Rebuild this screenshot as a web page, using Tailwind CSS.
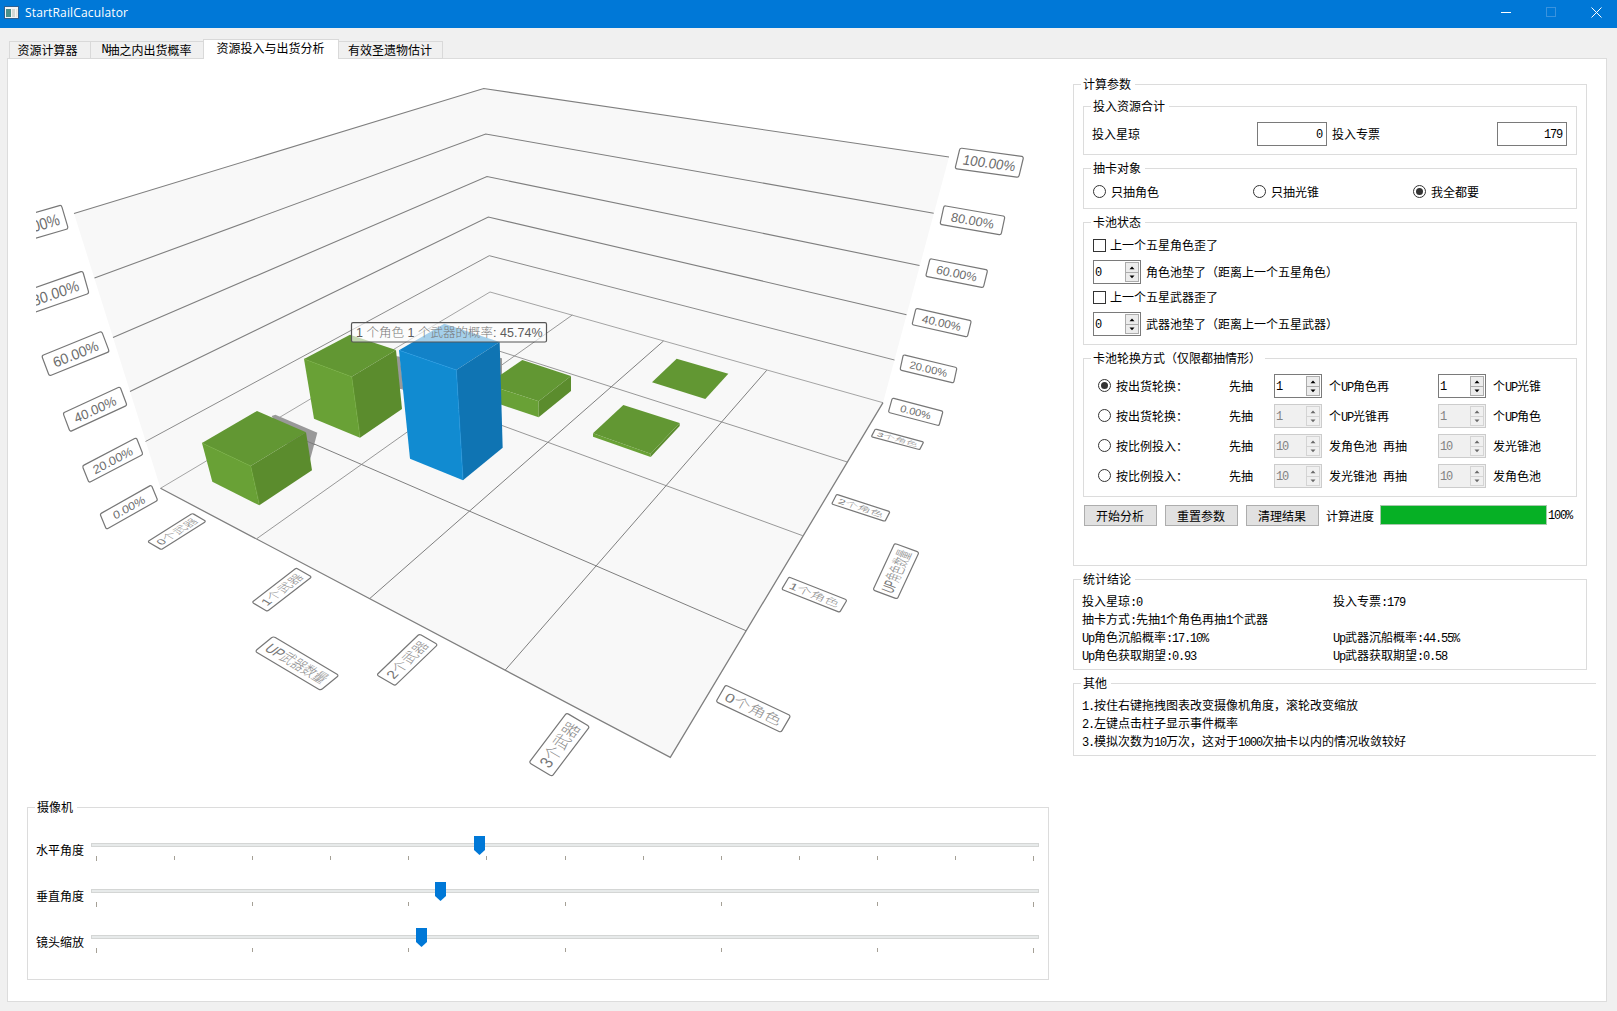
<!DOCTYPE html>
<html lang="zh-CN">
<head>
<meta charset="utf-8">
<title>StartRailCaculator</title>
<script src="https://cdn.jsdelivr.net/npm/@tailwindcss/browser@4"></script>
</head>
<body class="flex h-[1011px] w-[1617px] flex-col overflow-hidden bg-[#f0f0f0] font-['Noto_Sans_CJK_SC',sans-serif] text-[12px] leading-[18px] whitespace-nowrap text-black [&_i]:font-['Liberation_Mono',monospace] [&_i]:leading-none [&_i]:tracking-[-1.2px] [&_i]:not-italic">

<!-- Title bar -->
<header class="flex h-7 shrink-0 items-center bg-[#0078d7] pl-1 text-white">
  <svg class="-mt-1 h-[13px] w-[15px]" viewBox="0 0 15 13"><rect x=".5" y=".5" width="14" height="12" fill="#f4f4f4" stroke="#2f5f8f"/><rect x="2" y="3" width="5" height="8" fill="#4a8f8a"/><rect x="8" y="3" width="3" height="8" fill="#d4d8d4"/><rect x="12" y="3" width="1.5" height="8" fill="#e8e4dc"/></svg>
  <span class="-mt-[3px] ml-[6px] font-['Open_Sans',sans-serif] text-[12px] tracking-[0.16px]">StartRailCaculator</span>
  <svg class="-mt-1 mr-[15px] ml-auto h-[11px] w-[101px]" viewBox="0 0 101 11" fill="none" stroke="#fff"><path d="M0 5.5H10"/><rect x="45.500" y=".5" width="9" height="9" stroke="#3a93de"/><path d="M90.500 .5l10 10M100.500 .5l-10 10"/></svg>
</header>

<main class="flex flex-col pt-[11px] pl-[7px]">
  <!-- Tabs -->
  <nav class="relative z-10 -mb-px flex items-end pl-[2px] leading-[16px] [&>div]:flex [&>div]:justify-center [&>div]:border [&>div]:border-[#d9d9d9] [&>div]:pr-px">
    <div class="h-[18px] w-[82px] bg-[#f0f0f0] pr-[5px]!">资源计算器</div>
    <div class="-ml-px h-[18px] w-[114px] items-center bg-[#f0f0f0]"><i>N</i>抽之内出货概率</div>
    <div class="-ml-px h-[20px] w-[136px] border-b-0! bg-white">资源投入与出货分析</div>
    <div class="-ml-px h-[18px] w-[105px] bg-[#f0f0f0]">有效圣遗物估计</div>
  </nav>

  <section class="flex h-[944px] w-[1600px] border border-[#dcdcdc] bg-white">
    <div class="ml-[19px] flex w-[1022px] flex-col">
      <svg id="chart" class="ml-[9px] h-[748px] w-[1013px] shrink-0" viewBox="36 59 1013 748" fill="none">
        <!-- walls and floor -->
        <path fill="#f8f8f8" d="M74 213.500L483.700 88.500L949 157L883 402.700L670.300 757.300L160.500 488.300Z"/>
        <g stroke="#7f7f7f" stroke-width="1.100">
          <path d="M74 213.500L483.700 88.500L949 157"/>
          <path d="M94.500 278L485.700 134L933.700 213.300"/>
          <path d="M113 337.500L487 176.500L919.500 265.500"/>
          <path d="M130 391.500L488.300 217L906.500 314.700"/>
          <path stroke-width=".9" d="M145.500 441.500L489.300 255.700L894.500 360"/>
          <path stroke-width=".7" d="M160.500 488.300L490 292L883 402.700"/>
          <path stroke-width="1.300" d="M160.500 488.300L670.300 757.300L883 402.700"/>
          <path stroke-width=".8" d="M257 538.500L572.300 315M428.600 328.600L847.300 462M355.800 371.900L802.700 535.700"/>
          <path stroke-width="1" d="M370 598.300L663.500 341M505.300 670L766.700 370.300M268.200 424.100L746 630.700"/>
        </g>
        <!-- bars -->
        <g transform="translate(190 290) scale(.33333)">
          <path fill="#999" d="M245 378L256 374L382 428L360 510L300 480ZM616 198L630 200L640 296L626 297ZM928 203L936 205V300H928Z"/>
          <path stroke="#777" stroke-width="2.500" d="M340 449L375 464"/>
          <path fill="#629733" d="M36 459L201 363L348 427L182 528Z"/>
          <path fill="#69a136" d="M36 459L182 528L208 646L67 575Z"/>
          <path fill="#5b8c2d" d="M182 528L348 427L366 541L208 646Z"/>
          <path stroke="#6fab3a" stroke-width="2" d="M36 459L182 528L208 640"/>
          <path fill="#629733" d="M342 207L480 134L618 180L485 260Z"/>
          <path fill="#69a136" d="M342 207L485 260L510 443L372 386Z"/>
          <path fill="#5b8c2d" d="M485 260L618 180L636 357L510 443Z"/>
          <path stroke="#6fab3a" stroke-width="2" d="M342 207L485 260L510 438"/>
          <path fill="#629733" d="M930 256L997 210L1143 258L1046 334L930 296Z"/>
          <path fill="#69a136" d="M930 296L1046 334V382L930 343Z"/>
          <path fill="#5b8c2d" d="M1046 334L1143 258V303L1046 382Z"/>
          <path fill="#1282c8" d="M627 181L763 101L929 156L799 240Z"/>
          <path fill="#118bd1" d="M627 181L799 240L819 571L660 506Z"/>
          <path fill="#0f74b3" d="M799 240L929 156L938 473L819 571Z"/>
          <path stroke="#1d97e2" stroke-width="2" d="M627 181L799 240L819 566"/>
        </g>
        <g transform="translate(580 340) scale(.33333)">
          <path fill="#629733" d="M290 56L445 101L376 177L216 127Z"/>
          <path fill="#69a136" d="M39 280L212 341V351L39 290Z"/>
          <path fill="#5b8c2d" d="M212 341L299 249V258L212 351Z"/>
          <path fill="#629733" d="M130 195L299 249L212 341L39 280Z"/>
        </g>
        <g id="labels" font-family="'Liberation Sans','Noto Sans CJK SC',sans-serif"></g>
        <!-- selected bar label -->
        <rect x="351.500" y="322.700" width="195" height="19.300" rx="1.500" fill="#fff" fill-opacity=".62" stroke="#555" stroke-width="1.200"/>
        <text x="356" y="336.600" textLength="186.500" font-size="12.500" font-family="'Liberation Sans','Noto Sans CJK SC',sans-serif" fill="#5c5c5c"><tspan>1 </tspan><tspan font-weight="300" fill="#777">个角色</tspan> 1 <tspan font-weight="300" fill="#777">个武器的概率</tspan>: 45.74%</text>
      </svg>

      <!-- Camera -->
      <div class="relative h-[173px] border border-[#dcdcdc]">
        <span class="absolute -top-[10px] left-[7px] bg-white pr-1 pl-[2px]">摄像机</span>
        <div id="sliders" class="flex flex-col pt-[28px]"></div>
      </div>
    </div>

    <!-- Right column -->
    <div class="ml-[24px] flex w-[523px] flex-col overflow-hidden pt-[25px]">
      <div class="relative h-[482px] w-[514px] border border-[#dcdcdc] px-[9px] pt-[21px]">
        <span class="absolute -top-[10px] left-[7px] bg-white pr-1 pl-[2px]">计算参数</span>

        <div class="relative flex h-[49px] items-center border border-[#dcdcdc] pt-[7px] pl-[9px]">
          <span class="absolute -top-[10px] left-[7px] bg-white pr-1 pl-[2px]">投入资源合计</span>
          <span class="-ml-px w-[165px]">投入星琼</span>
          <div class="flex h-[24px] w-[70px] items-center justify-end border border-[#7a7a7a] pt-px pr-[4px]"><i>0</i></div>
          <span class="ml-[5px] w-[165px]">投入专票</span>
          <div class="flex h-[24px] w-[70px] items-center justify-end border border-[#7a7a7a] pt-px pr-[4px]"><i>179</i></div>
        </div>

        <div class="relative mt-[13px] flex h-[41px] items-center border border-[#dcdcdc] pt-[6px] pl-[9px]">
          <span class="absolute -top-[10px] left-[7px] bg-white pr-1 pl-[2px]">抽卡对象</span>
          <label class="flex w-[160px] items-center gap-[5px]"><span class="size-[13px] rounded-full border border-[#333]"></span>只抽角色</label>
          <label class="flex w-[160px] items-center gap-[5px]"><span class="size-[13px] rounded-full border border-[#333]"></span>只抽光锥</label>
          <label class="flex w-[140px] items-center gap-[5px]"><span class="flex size-[13px] items-center justify-center rounded-full border border-[#333]"><span class="size-[7px] rounded-full bg-[#333]"></span></span>我全都要</label>
        </div>

        <div class="relative mt-[13px] flex h-[123px] flex-col border border-[#dcdcdc] pt-[13px] pl-[9px]">
          <span class="absolute -top-[10px] left-[7px] bg-white pr-1 pl-[2px]">卡池状态</span>
          <label class="flex h-[18px] items-center gap-1"><span class="size-[13px] border border-[#333]"></span>上一个五星角色歪了</label>
          <div class="mt-[6px] flex h-[24px] items-center gap-[5px]"><div data-spin="0"></div><span>角色池垫了（距离上一个五星角色）</span></div>
          <label class="mt-[4px] flex h-[18px] items-center gap-1"><span class="size-[13px] border border-[#333]"></span>上一个五星武器歪了</label>
          <div class="mt-[6px] flex h-[24px] items-center gap-[5px]"><div data-spin="0"></div><span>武器池垫了（距离上一个五星武器）</span></div>
        </div>

        <div class="relative mt-[13px] flex h-[139px] flex-col gap-[6px] border border-[#dcdcdc] pt-[15px] pl-[14px] [&>div]:grid [&>div]:h-[24px] [&>div]:grid-cols-[18px_113px_45px_55px_54px_55px_55px_60px] [&>div]:items-center">
          <span class="absolute -top-[10px] left-[7px] bg-white pr-1 pl-[2px]">卡池轮换方式（仅限都抽情形）</span>
          <div><span class="-mt-px flex size-[13px] items-center justify-center rounded-full border border-[#333]"><span class="size-[7px] rounded-full bg-[#333]"></span></span><span>按出货轮换：</span><span>先抽</span><div data-spin="1"></div><span>个<i>UP</i>角色再</span><span></span><div data-spin="1"></div><span>个<i>UP</i>光锥</span></div>
          <div><span class="-mt-px size-[13px] rounded-full border border-[#333]"></span><span>按出货轮换：</span><span>先抽</span><div data-spin="1" data-off></div><span>个<i>UP</i>光锥再</span><span></span><div data-spin="1" data-off></div><span>个<i>UP</i>角色</span></div>
          <div><span class="-mt-px size-[13px] rounded-full border border-[#333]"></span><span>按比例投入：</span><span>先抽</span><div data-spin="10" data-off></div><span>发角色池</span><span>再抽</span><div data-spin="10" data-off></div><span>发光锥池</span></div>
          <div><span class="-mt-px size-[13px] rounded-full border border-[#333]"></span><span>按比例投入：</span><span>先抽</span><div data-spin="10" data-off></div><span>发光锥池</span><span>再抽</span><div data-spin="10" data-off></div><span>发角色池</span></div>
        </div>

        <div class="mt-[8px] flex h-[21px] items-center pl-px">
          <button class="h-[21px] w-[73px] border border-[#adadad] bg-[#e1e1e1] pr-px">开始分析</button>
          <button class="ml-[8px] h-[21px] w-[73px] border border-[#adadad] bg-[#e1e1e1] pr-px">重置参数</button>
          <button class="ml-[8px] h-[21px] w-[73px] border border-[#adadad] bg-[#e1e1e1] pr-px">清理结果</button>
          <span class="ml-[7px]">计算进度</span>
          <div class="-mt-px ml-[6px] h-[20px] w-[167px] border border-[#a8c8ac] bg-[#06b025]"></div>
          <i class="ml-px">100%</i>
        </div>
      </div>

      <div class="relative mt-[13px] h-[91px] w-[514px] border border-[#dcdcdc] pt-[12px] pl-[8px]">
        <span class="absolute -top-[10px] left-[7px] bg-white pr-1 pl-[2px]">统计结论</span>
        <div class="grid auto-rows-[18px] grid-cols-[251px_1fr]">
          <span>投入星琼<i>:0</i></span><span>投入专票<i>:179</i></span>
          <span class="col-span-2">抽卡方式<i>:</i>先抽<i>1</i>个角色再抽<i>1</i>个武器</span>
          <span><i>Up</i>角色沉船概率<i>:17.10%</i></span><span><i>Up</i>武器沉船概率<i>:44.55%</i></span>
          <span><i>Up</i>角色获取期望<i>:0.93</i></span><span><i>Up</i>武器获取期望<i>:0.58</i></span>
        </div>
      </div>

      <div class="relative mt-[13px] flex h-[73px] w-[523px] flex-col border border-r-0 border-[#dcdcdc] pt-[12px] pl-[8px] [&>span]:h-[18px]">
        <span class="absolute -top-[10px] left-[7px] bg-white pr-1 pl-[2px]">其他</span>
        <span><i>1.</i>按住右键拖拽图表改变摄像机角度，滚轮改变缩放</span>
        <span><i>2.</i>左键点击柱子显示事件概率</span>
        <span><i>3.</i>模拟次数为<i>10</i>万次，这对于<i>1000</i>次抽卡以内的情况收敛较好</span>
      </div>
    </div>
  </section>
</main>

<script>
// Spin boxes
document.querySelectorAll('[data-spin]').forEach(el => {
  const off = el.hasAttribute('data-off');
  el.className = off
    ? 'flex h-[24px] w-[48px] items-center justify-between border border-[#cccccc] bg-[#f0f0f0] pr-px pl-px text-[#838383]'
    : 'flex h-[24px] w-[48px] items-center justify-between border border-[#7a7a7a] bg-white pr-px pl-px';
  const b = off ? '#d4d4d4' : '#acacac', a = off ? '#6a6a6a' : '#000', f = off ? '#f0f0f0' : '#ececec';
  el.innerHTML = `<i class="pt-px">${el.dataset.spin}</i><svg class="h-[20px] w-[14px]" viewBox="0 0 14 20"><rect x=".5" y=".5" width="13" height="10" fill="${f}" stroke="${b}"/><rect x=".5" y="10.500" width="13" height="9" fill="${f}" stroke="${b}"/><path d="M4.500 7.200h5L7 4.500zM4.500 13.500h5L7 16.200z" fill="${a}"/></svg>`;
});

// Camera sliders: label, handle offset, number of tick intervals
document.getElementById('sliders').innerHTML = [['水平角度', 383, 12], ['垂直角度', 344, 6], ['镜头缩放', 325, 6]].map(([t, x, n]) => {
  let ticks = '';
  for (let i = 0; i <= n; i++) ticks += `<rect x="${Math.round(5 + i * 937 / n)}" y="20" width="1" height="${i % n ? 4 : 5}" fill="#a5a096"/>`;
  return `<div class="flex h-[46px] items-start pl-[8px]"><span class="mt-[5px] w-[55px]">${t}</span><svg class="h-[26px] w-[948px]" viewBox="0 0 948 26"><rect x=".5" y="7.500" width="947" height="3" fill="#e7eaea" stroke="#d4d6d5"/>${ticks}<path fill="#0078d7" d="M${x} 0h11v14l-5.500 5l-5.500 -5z"/></svg></div>`;
}).join('');

// Axis labels: text, text width, origin x/y, then top-left, top-right, bottom-left corners in thirds of a pixel
const L = [
  ['100.00%', 82, 880,120, 240,84, 431,110, 225,146], ['80.00%', 70, 880,120, 192,257, 375,289, 180,313],
  ['60.00%', 70, 880,120, 150,416, 323,450, 137,469], ['40.00%', 70, 880,120, 108,565, 274,602, 96,614],
  ['20.00%', 70, 880,120, 70,704, 231,743, 60,750], ['0.00%', 60, 880,120, 37,834, 189,874, 25,877],
  ['100.00%', 82, 0,0, -11,672, 184,615, 10,743], ['80.00%', 76, 0,0, 66,877, 248,813, 85,944],
  ['60.00%', 74, 0,280, 125,227, 305,154, 148,288], ['40.00%', 72, 0,280, 189,399, 360,320, 210,455],
  ['20.00%', 72, 0,280, 247,558, 409,473, 267,608], ['0.00%', 60, 0,280, 300,702, 454,615, 319,748],
  ['0个武器', 84, 0,280, 443,785, 577,700, 484,809], ['1个武器', 84, 230,540, 66,187, 199,84, 112,214],
  ['2个武器', 84, 230,540, 440,405, 568,282, 495,437], ['3个武器', 84, 230,540, 897,668, 1010,519, 966,709],
  ['UP武器数量', 88, 230,540, 130,289, 327,406, 75,334],
  ['3个角色', 84, 580,340, 886,267, 1031,306, 874,290], ['2个角色', 84, 580,340, 770,463, 930,515, 755,492],
  ['1个角色', 84, 640,520, 447,171, 621,240, 425,208], ['0个角色', 84, 640,520, 257,495, 452,587, 228,545],
  ['UP角色数量', 88, 640,520, 699,210, 764,70, 772,237]
];
document.getElementById('labels').innerHTML = L.map(([t, w, ox, oy, ax, ay, bx, by, cx, cy]) => {
  const W = 100, H = 30, m = [(bx-ax)/3/W, (by-ay)/3/W, (cx-ax)/3/H, (cy-ay)/3/H, ox+ax/3, oy+ay/3].map(v => v.toFixed(4));
  const cjk = /[^\x00-\x7f]/.test(t);
  return `<g transform="matrix(${m})"><rect width="${W}" height="${H}" rx="3" fill="#fff" stroke="#777" stroke-width="1.200" vector-effect="non-scaling-stroke"/><text x="${(W - w) / 2}" y="22.500" font-size="20" textLength="${w}" lengthAdjust="spacingAndGlyphs" fill="${cjk ? '#777' : '#6c6c6c'}">${t.replace(/[^\x00-\x7f]+/, s => `<tspan font-weight="300" fill="#8c8c8c">${s}</tspan>`)}</text></g>`;
}).join('');
</script>
</body>
</html>
